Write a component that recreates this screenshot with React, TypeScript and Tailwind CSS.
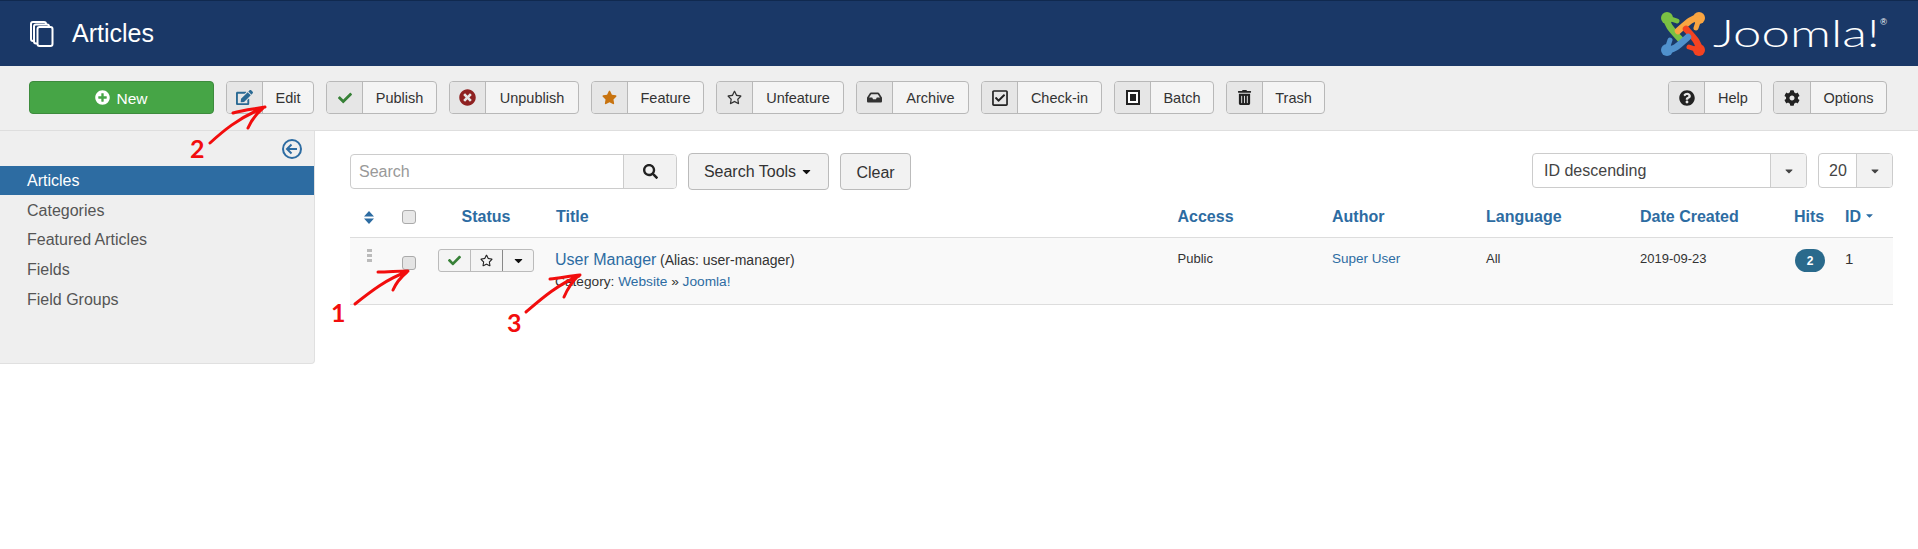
import React from "react";
import { FaCheck, FaCog, FaEdit, FaPlusCircle, FaQuestionCircle, FaRegCheckSquare, FaRegStar, FaSearch, FaStar, FaTimesCircle, FaTrashAlt, FaCaretDown, FaInbox } from "react-icons/fa";

const font = "font-['Liberation_Sans',Arial,sans-serif]";

function ToolButton({ icon, label, w, iconW = 36 }: { icon: React.ReactNode; label: string; w: number; iconW?: number }) {
  return (
    <div style={{ width: w }} className="flex h-[33px] shrink-0 overflow-hidden rounded-[4px] border border-[#b8b8b8] bg-[#f4f4f4] text-[14.5px] text-[#333]">
      <div style={{ width: iconW }} className="flex shrink-0 items-center justify-center border-r border-[#b8b8b8] bg-[#e6e6e6]">{icon}</div>
      <div className="flex flex-1 items-center justify-center pt-[2px]">{label}</div>
    </div>
  );
}

function StackIcon() {
  return (
    <svg width="25" height="26" viewBox="0 0 25 26" fill="none" stroke="#fff" strokeWidth="2">
      <rect x="1" y="1" width="15" height="19" rx="2" />
      <rect x="4" y="3.5" width="15" height="19" rx="2" fill="#1a3867" />
      <rect x="7.5" y="6" width="15" height="19" rx="2" fill="#1a3867" />
    </svg>
  );
}

function Ribbon({ color, angle }: { color: string; angle: number }) {
  return (
    <g transform={`rotate(${angle} 23 23)`} stroke={color} fill="none" strokeLinecap="round">
      <circle cx="7" cy="7" r="6" fill={color} stroke="none" />
      <path d="M7 8 C7 14 11 18 20 28" strokeWidth="6.5" />
      <path d="M8 7 L17 10" strokeWidth="5" />
    </g>
  );
}

function JoomlaMark() {
  return (
    <svg width="46" height="46" viewBox="0 0 46 46" className="shrink-0">
      <Ribbon color="#7ac143" angle={0} />
      <Ribbon color="#f9a541" angle={90} />
      <Ribbon color="#f44321" angle={180} />
      <Ribbon color="#5091cd" angle={270} />
    </svg>
  );
}

function Annotations() {
  return (
    <>
      <svg className="pointer-events-none absolute left-0 top-0" width="1918" height="549" fill="none" stroke="#f20d0d" strokeWidth="3" strokeLinecap="round" strokeLinejoin="round">
        <path d="M210 143 C222 132 238 118 263 108 M233 113 C243 110 254 109 265 107 M248 128 C251 121 256 114 263 108" />
        <path d="M355 304 C370 292 388 278 407 272 M378 272 C388 272 398 271 408 271 M393 290 C396 283 401 277 407 272" />
        <path d="M526 312 C540 300 558 284 579 276 M550 279 C560 278 570 276 580 275 M564 297 C567 290 572 282 578 276" />
      </svg>
      <span className="absolute left-[190px] top-[133px] font-['Lato',sans-serif] text-[25px] font-bold leading-[30px] text-[#f20d0d]">2</span>
      <span className="absolute left-[331px] top-[297px] font-['Lato',sans-serif] text-[25px] font-bold leading-[30px] text-[#f20d0d]">1</span>
      <span className="absolute left-[507px] top-[307px] font-['Lato',sans-serif] text-[25px] font-bold leading-[30px] text-[#f20d0d]">3</span>
    </>
  );
}

const cols = "grid grid-cols-[38px_42px_112px_621.5px_154.5px_154px_154px_154px_51px_62px]";
const th = "pl-[14px] text-[16px] font-bold text-[#2d6ca2]";
const link = "text-[#2d6ca2]";

export default function App() {
  return (
    <div className={`relative h-[549px] w-[1918px] overflow-hidden bg-white ${font}`}>
      <header className="flex h-[66px] items-center justify-between border-t border-[#10294f] bg-[#1a3867] pl-[30px] pr-[31px]">
        <div className="flex items-center gap-[17px] text-white">
          <StackIcon />
          <h1 className="text-[25px] leading-none">Articles</h1>
        </div>
        <div className="flex items-center">
          <JoomlaMark />
          <div className="ml-[7px] w-[167px]">
            <span className="inline-block origin-left scale-x-[1.34] font-['Lato',sans-serif] text-[38px] font-light leading-none text-white">Joomla!</span>
          </div>
          <span className="mb-[22px] text-[9px] text-white">®</span>
        </div>
      </header>

      <div className="flex h-[65px] items-center justify-between border-b border-[#dedede] bg-[#efefef] pb-[1px] pl-[29px] pr-[31px]">
        <div className="flex items-center gap-[12px]">
          <div className="flex h-[33px] w-[185px] items-center justify-center gap-[6px] rounded-[4px] border border-[#3d8b3d] bg-[#46a546] text-[15.5px] text-white">
            <FaPlusCircle className="text-[15px]" /> <span className="pt-[2px]">New</span>
          </div>
          <ToolButton w={88} label="Edit" icon={<FaEdit className="text-[17px] text-[#2a6a94]" />} />
          <ToolButton w={111} label="Publish" icon={<FaCheck className="text-[14px] text-[#378137]" />} />
          <ToolButton w={130} label="Unpublish" icon={<FaTimesCircle className="text-[17px] text-[#8f2222]" />} />
          <ToolButton w={113} label="Feature" icon={<FaStar className="text-[15px] text-[#c8730f]" />} />
          <ToolButton w={128} label="Unfeature" icon={<FaRegStar className="text-[15px] text-[#333]" />} />
          <ToolButton w={113} label="Archive" icon={<FaInbox className="text-[15px] text-[#333]" />} />
          <ToolButton w={121} label="Check-in" icon={<FaRegCheckSquare className="text-[18px] text-[#222]" />} />
          <ToolButton w={100} label="Batch" icon={<span className="flex h-[15px] w-[14px] items-center justify-center border-2 border-[#222] bg-white"><span className="h-[7px] w-[6px] bg-[#222]" /></span>} />
          <ToolButton w={99} label="Trash" icon={<FaTrashAlt className="text-[15px] text-[#222]" />} />
        </div>
        <div className="flex items-center gap-[11px]">
          <ToolButton w={94} label="Help" icon={<FaQuestionCircle className="text-[16px] text-[#222]" />} />
          <ToolButton w={114} iconW={37} label="Options" icon={<FaCog className="text-[16px] text-[#222]" />} />
        </div>
      </div>

      <div className="flex items-start">
        <aside className="h-[233px] w-[315px] shrink-0 rounded-br-[4px] border-b border-r border-[#e0e0e0] bg-[#efefef] text-[16px] text-[#555]">
          <div className="flex h-[35px] items-center justify-end pr-[12px]">
            <svg width="20" height="20" viewBox="0 0 20 20" fill="none" stroke="#2d6ca2" strokeWidth="2"><circle cx="10" cy="10" r="9" /><path d="M15 10H5.5M9.5 5.5 5 10l4.5 4.5" /></svg>
          </div>
          <div className="flex h-[29px] items-center bg-[#2d6ca2] pl-[27px] pt-[1px] text-white">Articles</div>
          {["Categories", "Featured Articles", "Fields", "Field Groups"].map((t) => (
            <div key={t} className="flex h-[29.6px] items-center pl-[27px] pt-[2px]">{t}</div>
          ))}
        </aside>

        <main className="w-[1578px] pl-[35px]">
          <div className="flex h-[68px] items-start pt-[23px]">
            <div className="flex h-[35px] w-[327px] overflow-hidden rounded-[4px] border border-[#ccc] text-[16px]">
              <div className="flex flex-1 items-center pl-[8px] text-[#999]">Search</div>
              <div className="flex w-[53px] items-center justify-center border-l border-[#ccc] bg-[#f2f2f2]"><FaSearch className="text-[15px] text-[#222]" /></div>
            </div>
            <div className="ml-[11px] flex h-[37px] w-[141px] -translate-y-[1px] items-center justify-center gap-[4px] rounded-[4px] border border-[#bbb] bg-[#f2f2f2] text-[16px] text-[#333]">Search Tools <FaCaretDown className="text-[13px] text-[#111]" /></div>
            <div className="ml-[11px] flex h-[37px] w-[71px] -translate-y-[1px] items-center justify-center rounded-[4px] border border-[#bbb] bg-[#f2f2f2] pt-[2px] text-[16px] text-[#333]">Clear</div>
            <div className="ml-auto flex h-[35px] w-[275px] -translate-y-[1px] overflow-hidden rounded-[4px] border border-[#ccc] text-[16px] text-[#444]">
              <div className="flex flex-1 items-center pl-[11px]">ID descending</div>
              <div className="flex w-[36px] items-center justify-center border-l border-[#ccc] bg-[#f2f2f2]"><FaCaretDown className="text-[12px] text-[#444]" /></div>
            </div>
            <div className="ml-[11px] flex h-[35px] w-[75px] -translate-y-[1px] overflow-hidden rounded-[4px] border border-[#ccc] text-[16px] text-[#444]">
              <div className="flex flex-1 items-center pl-[10px]">20</div>
              <div className="flex w-[36px] items-center justify-center border-l border-[#ccc] bg-[#f2f2f2]"><FaCaretDown className="text-[12px] text-[#444]" /></div>
            </div>
          </div>

          <div className={`${cols} h-[39px] items-center border-b border-[#ddd] pb-[2px]`}>
            <div className="flex justify-center">
              <svg width="12" height="13" viewBox="0 0 12 13" fill="#2d6ca2"><path d="M6 0l5 5.5H1zM6 13 1 7.5h10z" /></svg>
            </div>
            <div className="flex justify-center"><span className="h-[14px] w-[14px] rounded-[3px] border border-[#aaa] bg-[#e8e8e8]" /></div>
            <div className="text-center text-[16px] font-bold text-[#2d6ca2]">Status</div>
            <div className={th}>Title</div>
            <div className={th}>Access</div>
            <div className={th}>Author</div>
            <div className={th}>Language</div>
            <div className={th}>Date Created</div>
            <div className={th}>Hits</div>
            <div className={`${th} flex items-center gap-[3px]`}>ID <FaCaretDown className="-translate-y-[2px] text-[11px]" /></div>
          </div>
          <div className={`${cols} h-[67px] border-b border-[#ddd] bg-[#f9f9f9] pt-[11px] text-[13px] text-[#333]`}>
            <div className="flex justify-center">
              <svg width="5" height="15" viewBox="0 0 5 15" fill="#bbb"><rect width="5" height="3" y="0" /><rect width="5" height="3" y="5" /><rect width="5" height="3" y="10" /></svg>
            </div>
            <div className="flex justify-center pt-[7px]"><span className="h-[14px] w-[14px] rounded-[3px] border border-[#aaa] bg-[#e4e4e4]" /></div>
            <div className="flex justify-center">
              <div className="flex h-[23px] w-[96px] overflow-hidden rounded-[3px] border border-[#bbb] bg-[#f4f4f4]">
                <div className="flex w-[32px] items-center justify-center border-r border-[#bbb]"><FaCheck className="text-[13px] text-[#378137]" /></div>
                <div className="flex w-[32px] items-center justify-center border-r border-[#888]"><FaRegStar className="text-[13px] text-[#222]" /></div>
                <div className="flex flex-1 items-center justify-center"><FaCaretDown className="text-[13px] text-[#111]" /></div>
              </div>
            </div>
            <div className="pl-[13px]">
              <div className="pt-[1px] leading-[20px]"><span className={`text-[16px] ${link}`}>User Manager</span> <span className="text-[14px]">(Alias: user-manager)</span></div>
              <div className="mt-[1px] text-[13.7px] leading-[20px]">Category: <span className={link}>Website</span> » <span className={link}>Joomla!</span></div>
            </div>
            <div className="pl-[14px] pt-[2px] leading-[16px]">Public</div>
            <div className={`pl-[14px] pt-[2px] text-[13.5px] leading-[16px] ${link}`}>Super User</div>
            <div className="pl-[14px] pt-[2px] leading-[16px]">All</div>
            <div className="pl-[14px] pt-[2px] leading-[16px]">2019-09-23</div>
            <div className="pl-[15px]"><span className="flex h-[23px] w-[30px] items-center justify-center rounded-full bg-[#2a6a8c] text-[12px] font-bold text-white">2</span></div>
            <div className="pl-[14px] text-[15px] leading-[20px]">1</div>
          </div>
        </main>
      </div>

      <Annotations />
    </div>
  );
}
